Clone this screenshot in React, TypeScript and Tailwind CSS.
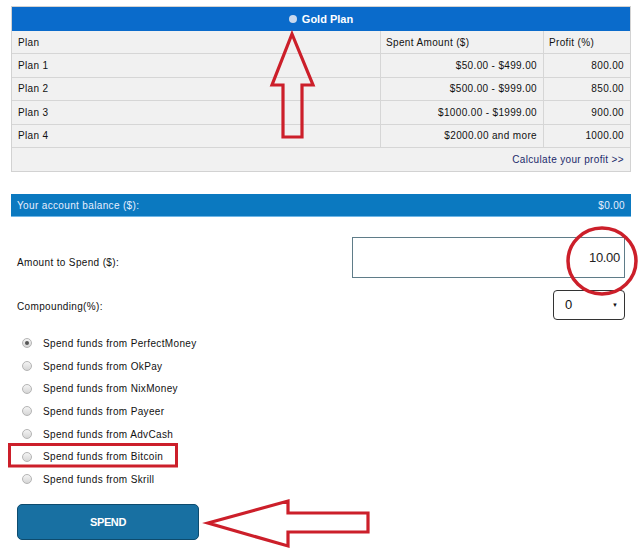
import React from 'react';

const plans = [
  { name: 'Plan 1', amount: '$50.00 - $499.00', profit: '800.00' },
  { name: 'Plan 2', amount: '$500.00 - $999.00', profit: '850.00' },
  { name: 'Plan 3', amount: '$1000.00 - $1999.00', profit: '900.00' },
  { name: 'Plan 4', amount: '$2000.00 and more', profit: '1000.00' },
];

const sources = ['PerfectMoney', 'OkPay', 'NixMoney', 'Payeer', 'AdvCash', 'Bitcoin', 'Skrill'];

function Radio({ checked }: { checked?: boolean }) {
  return (
    <span className="w-[10px] h-[10px] rounded-full border border-[#b4b4b4] bg-gradient-to-b from-[#f4f4f4] to-[#d6d6d6] flex items-center justify-center shrink-0">
      {checked && <span className="w-[4px] h-[4px] rounded-full bg-[#555]" />}
    </span>
  );
}

export default function App() {
  return (
    <div className="relative w-[640px] h-[549px] bg-white overflow-hidden font-['Liberation_Sans',Arial,sans-serif] text-[10px] text-[#111] tracking-[0.35px]">
      <div className="pt-[6px] ml-[11px] w-[620px]">
        {/* Plan table */}
        <div className="border border-[#d2d2d2]">
          <div className="h-[24px] bg-[#0a6bcb] flex items-center justify-center gap-[5px] text-white font-bold text-[11px] tracking-normal">
            <span className="w-[8px] h-[8px] rounded-full bg-[#c9d9ee]" />
            <span>Gold Plan</span>
          </div>
          <div className="grid grid-cols-[368px_163px_1fr] bg-[#f1f1f1]">
            <div className="h-[23px] flex items-center px-[6px] border-b border-[#d6d6d6]">Plan</div>
            <div className="h-[23px] flex items-center px-[5px] border-b border-l border-[#d6d6d6]">Spent Amount ($)</div>
            <div className="h-[23px] flex items-center px-[5px] border-b border-l border-[#d6d6d6]">Profit (%)</div>
            {plans.map((p) => (
              <React.Fragment key={p.name}>
                <div className="h-[23.5px] flex items-center px-[6px] border-b border-[#d6d6d6]">{p.name}</div>
                <div className="h-[23.5px] flex items-center justify-end px-[6px] border-b border-l border-[#d6d6d6]">{p.amount}</div>
                <div className="h-[23.5px] flex items-center justify-end px-[6px] border-b border-l border-[#d6d6d6]">{p.profit}</div>
              </React.Fragment>
            ))}
          </div>
          <div className="h-[23px] bg-[#f1f1f1] flex items-center justify-end px-[6px] text-[#1c2a6b]">
            Calculate your profit &gt;&gt;
          </div>
        </div>

        {/* Balance */}
        <div className="mt-[22px] h-[23px] bg-[#0b79c0] border-b border-[#6fb6e6] flex items-center justify-between px-[6px] text-[#e6eeff]">
          <span>Your account balance ($):</span>
          <span>$0.00</span>
        </div>

        {/* Form */}
        <div className="px-[6px]">
          <div className="mt-[20px] flex items-center justify-between">
            <span className="pt-[9px]">Amount to Spend ($):</span>
            <div className="w-[273px] h-[41px] border border-[#5f7c88] flex items-center justify-end pr-[4px] text-[13px] tracking-[-0.3px] text-[#222]">
              10.00
            </div>
          </div>
          <div className="mt-[12px] flex items-center justify-between">
            <span className="pt-[3px]">Compounding(%):</span>
            <div className="w-[72px] h-[30px] border border-[#333] rounded-[4px] flex items-center justify-between pl-[11px] pr-[6px] text-[13px] tracking-normal">
              <span>0</span>
              <span className="text-[6px]">▼</span>
            </div>
          </div>

          <div className="mt-[12px] flex flex-col pl-[5px]">
            {sources.map((s, i) => (
              <div key={s} className="h-[22.7px] flex items-center gap-[11px]">
                <Radio checked={i === 0} />
                <span>Spend funds from {s}</span>
              </div>
            ))}
          </div>

          <button className="mt-[13px] w-[182px] h-[36px] bg-[#1870a2] border border-[#0d4b6e] rounded-[5px] text-white font-bold text-[11px] tracking-[-0.4px]">
            SPEND
          </button>
        </div>
      </div>

      {/* Red annotations */}
      <svg className="absolute inset-0 pointer-events-none" width="640" height="549" viewBox="0 0 640 549" fill="none">
        <polygon points="292,34 313,85 302,85 302,137 283,137 283,85 272,85" stroke="#cc1f2a" strokeWidth="3.2" strokeLinejoin="miter" />
        <ellipse cx="602" cy="261" rx="34" ry="33" stroke="#cc1f2a" strokeWidth="3.5" />
        <rect x="9.5" y="444.5" width="167" height="21.5" stroke="#cc1f2a" strokeWidth="3" />
        <polygon points="208,523 288,501 288,513 368,513 368,532 288,532 288,546" stroke="#cc1f2a" strokeWidth="3.2" strokeLinejoin="miter" />
      </svg>
    </div>
  );
}
